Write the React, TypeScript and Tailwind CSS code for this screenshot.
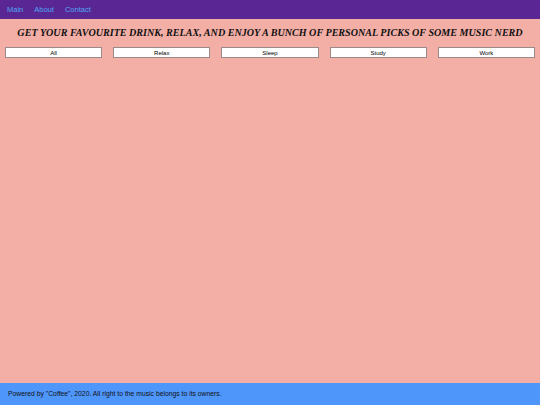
import React from 'react';

export default function App() {
  const links = ['Main', 'About', 'Contact'];
  const filters = ['All', 'Relax', 'Sleep', 'Study', 'Work'];

  return (
    <div className="min-h-screen flex flex-col bg-[#f3aea6] font-['Liberation_Sans',Arial,sans-serif]">
      {/* Nav */}
      <nav className="h-[19px] bg-[#5a2693] flex items-center pl-[7px] gap-[11px]">
        {links.map((l) => (
          <a key={l} className="text-[7.5px] text-[#4fa6f5] leading-none">
            {l}
          </a>
        ))}
      </nav>

      {/* Content */}
      <main className="flex-1">
        <h1 className="mt-[7px] text-center text-[10.1px] font-bold italic text-[#111] font-['Liberation_Serif','Times_New_Roman',serif] leading-[14px] whitespace-nowrap">
          GET YOUR FAVOURITE DRINK, RELAX, AND ENJOY A BUNCH OF PERSONAL PICKS OF SOME MUSIC NERD
        </h1>
        <div className="mt-[7px] px-[5px] grid grid-cols-5 gap-[11px]">
          {filters.map((f) => (
            <button
              key={f}
              className="h-[11px] bg-white border border-[#9a8a8a] text-[6px] leading-none text-black flex items-center justify-center"
            >
              {f}
            </button>
          ))}
        </div>
      </main>

      {/* Footer */}
      <footer className="h-[22px] bg-[#4f96fb] flex items-center pl-[8px]">
        <p className="text-[6.8px] text-[#111]">
          Powered by "Coffee", 2020. All right to the music belongs to its owners.
        </p>
      </footer>
    </div>
  );
}
